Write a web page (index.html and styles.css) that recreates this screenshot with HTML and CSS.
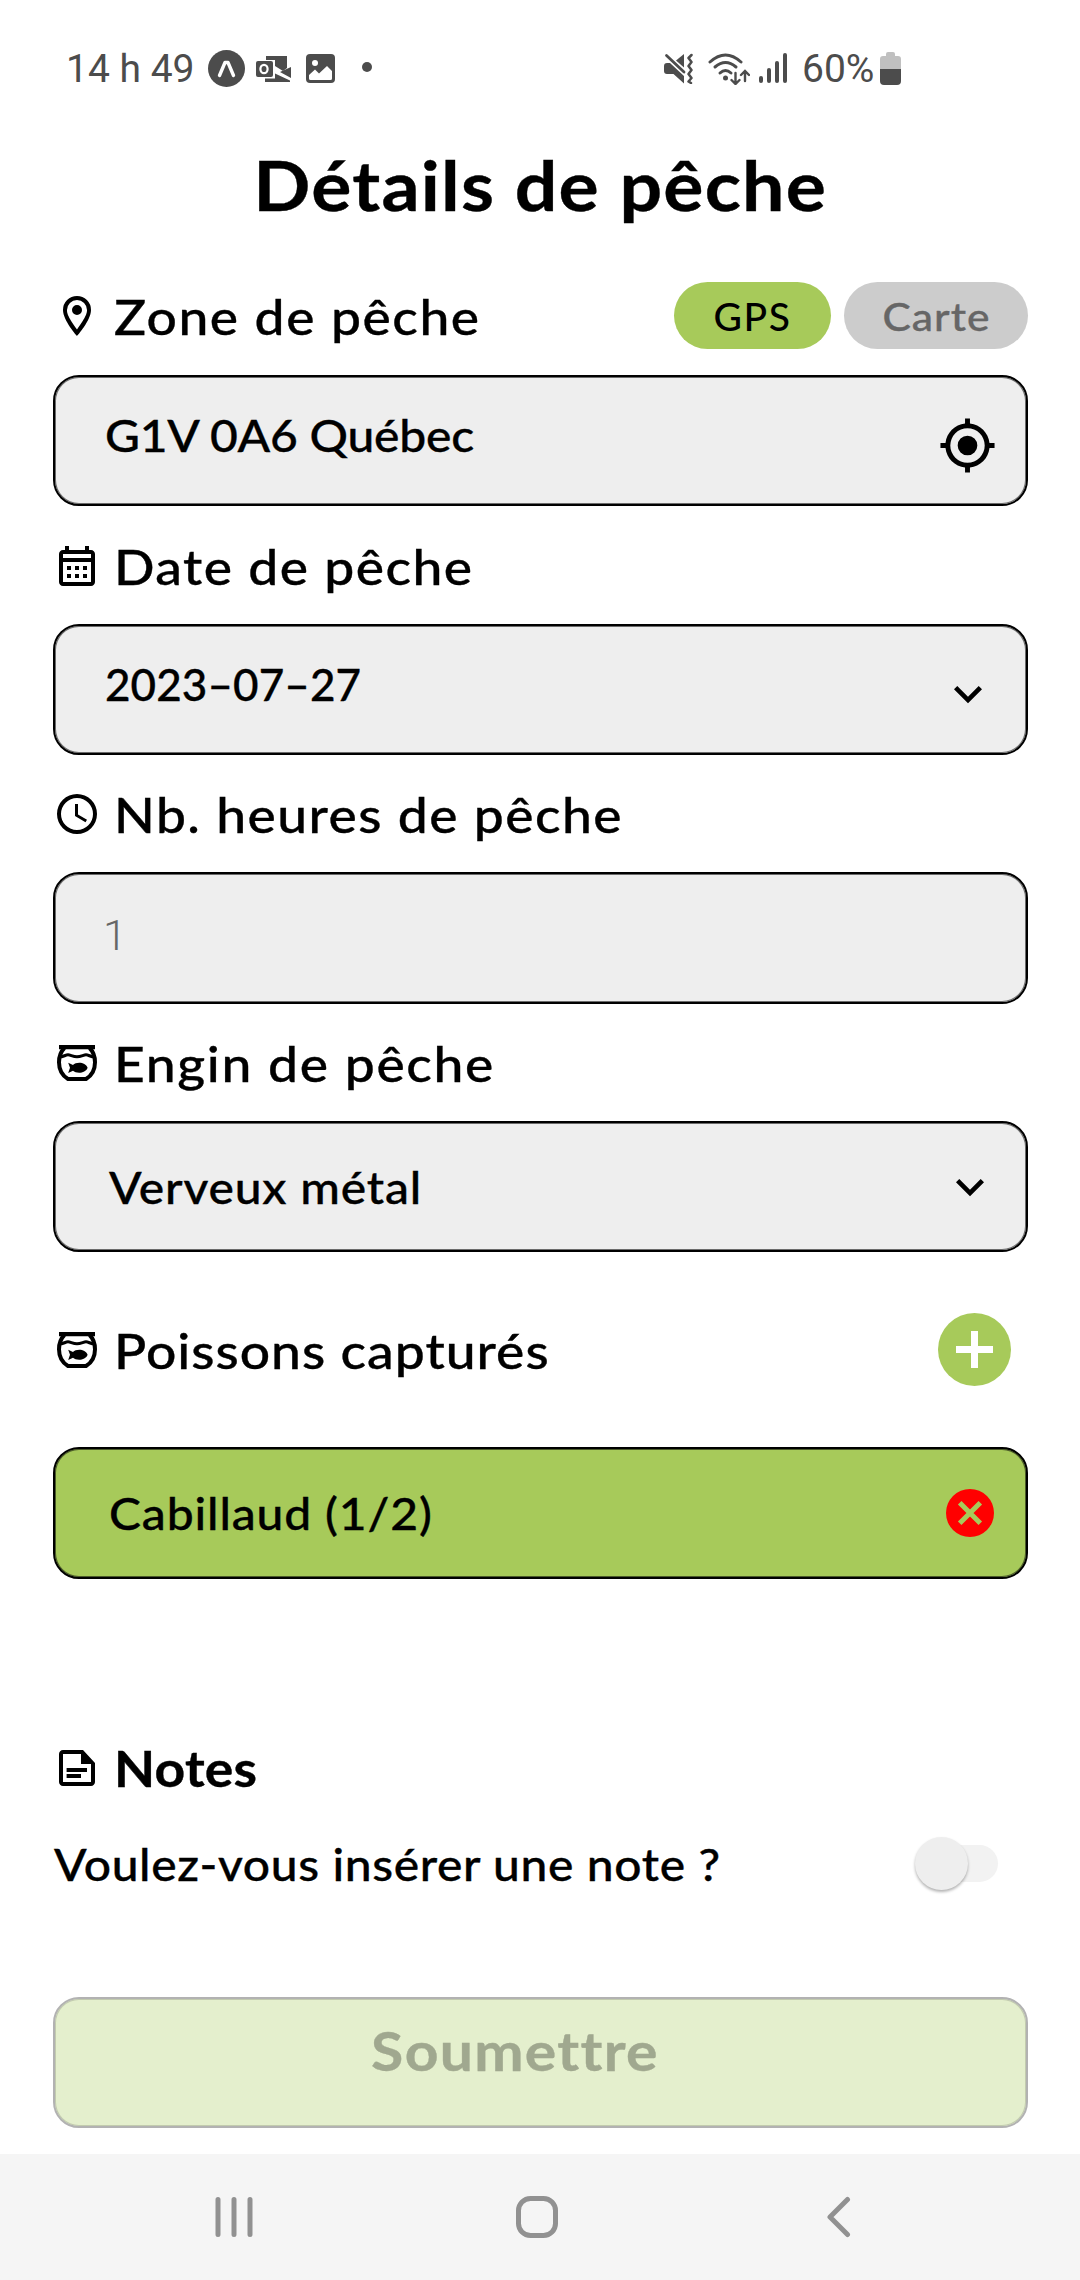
FILE: index.html
```html
<!DOCTYPE html>
<html lang="fr">
<head>
<meta charset="utf-8">
<title>Détails de pêche</title>
<link rel="stylesheet" href="styles.css">
</head>
<body>
<svg class="defs" width="0" height="0">
  <symbol id="fishbowl" viewBox="0 0 24 24">
    <path d="M3 3h18v2.1H3z"/>
    <path d="M5.7 4.5C3.9 6.300 3 8.900 3 11.600C3 15.200 4.700 18.300 7.500 20H16.500C19.300 18.300 21 15.200 21 11.600C21 8.900 20.100 6.300 18.300 4.500" fill="none" stroke="currentColor" stroke-width="2"/>
    <path d="M3.300 9C5 9 6.300 7.900 7.500 7.900S10 8.900 12 8.900S15.300 7.900 16.500 7.900S19 9 20.700 9" fill="none" stroke="currentColor" stroke-width="1.500"/>
    <path d="M7.600 11.900L10 13C11.500 11.300 16.300 11.300 17.300 14.400C16.300 17.400 11.500 17.400 10 15.900L7.600 17L8.500 14.400Z"/>
  </symbol>
  <symbol id="chevron" viewBox="0 0 24 24">
    <path d="M7.410 8.580L12 13.170L16.590 8.580L18 10L12 16L6 10Z"/>
  </symbol>
</svg>

<header class="status">
  <span class="clock">14 h 49</span>
  <svg class="expo" width="37" height="37" viewBox="0 0 37 37"><circle cx="18.500" cy="18.500" r="18.500"/><path d="M11.500 25.500L17 12.500H20L25.500 25.500" fill="none" stroke="#fff" stroke-width="3.400" stroke-linecap="round" stroke-linejoin="round"/></svg>
  <svg class="mail" width="35" height="28" viewBox="0 0 35 28"><path d="M10 1H31V13L27 16L19 11V5H10Z"/><rect x="0" y="6" width="17" height="16" rx="2"/><ellipse cx="8" cy="14" rx="3.600" ry="4.200" fill="none" stroke="#fff" stroke-width="2.200"/><path d="M35 12V23L24 17ZM9 23.500H19V18.500L34 25.500V27H9Z"/></svg>
  <svg class="photo" width="29" height="29" viewBox="0 0 29 29"><rect width="29" height="29" rx="4"/><circle cx="9" cy="9" r="3" fill="#fff"/><path d="M3 21L9 15.500L13 19.500L21 12L26 17V24.500Q26 26 24.500 26H4.500Q3 26 3 24.500Z" fill="#fff"/></svg>
  <i class="dot"></i>
  <span class="spacer"></span>
  <svg class="mute" width="30" height="31" viewBox="0 0 30 31"><path d="M0 13Q0 10 3 10H6L20 23V30.500L9.500 21H3Q0 21 0 18Z"/><path d="M12 7.500L20 1V14.500Z"/><path d="M2.500 2.500L20 19" stroke="currentColor" stroke-width="2.800" stroke-linecap="round"/><path d="M27.500 2L24.500 5L27.500 9L24.500 13L27.500 17L24.500 21L27.500 25L24.500 28.500L27 30" fill="none" stroke="currentColor" stroke-width="2.500" stroke-linecap="round" stroke-linejoin="round"/></svg>
  <svg class="wifi" width="42" height="32" viewBox="0 0 42 32"><g fill="none" stroke="currentColor" stroke-width="3" stroke-linecap="round"><path d="M2 9Q17.500-5 33 9"/><path d="M7 14Q17.500 5 28 14"/><path d="M12 20Q17.500 15 23 20"/><path d="M27.500 20V30M23.500 27L27.500 31L31.500 27M37 28V19M33 22L37 18L41 22" stroke-width="2.400"/></g><circle cx="17.500" cy="25" r="2.500"/></svg>
  <svg class="bars" width="28" height="31" viewBox="0 0 28 31"><rect y="23" width="4" height="7" rx="2"/><rect x="8" y="15" width="4" height="15" rx="2"/><rect x="16" y="8" width="4" height="22" rx="2"/><rect x="24" width="4" height="30" rx="2"/></svg>
  <span class="percent">60%</span>
  <svg class="battery" width="21" height="33" viewBox="0 0 21 33"><path d="M6 2Q6 0 8 0H13Q15 0 15 2V4H18Q21 4 21 7V17H0V7Q0 4 3 4H6Z" fill="#c0c0c0"/><path d="M0 17H21V29Q21 33 17 33H4Q0 33 0 29Z"/></svg>
</header>

<h1 class="title"><span class="wide">Détails de pêche</span></h1>

<main class="form">
  <div class="label">
    <svg class="icon" viewBox="0 0 24 24"><path d="M12 6.500A2.500 2.500 0 0 1 14.500 9A2.500 2.500 0 0 1 12 11.500A2.500 2.500 0 0 1 9.500 9A2.500 2.500 0 0 1 12 6.500M12 2A7 7 0 0 1 19 9C19 14.250 12 22 12 22S5 14.250 5 9A7 7 0 0 1 12 2M12 4A5 5 0 0 0 7 9C7 10 7 12 12 18.710C17 12 17 10 17 9A5 5 0 0 0 12 4Z"/></svg>
    <span class="wide t-zone">Zone de pêche</span>
    <div class="pills">
      <button class="pill pill-on"><span>GPS</span></button>
      <button class="pill pill-off"><span class="wide">Carte</span></button>
    </div>
  </div>
  <div class="field field-high">
    <span class="wide t-place">G1V 0A6 Québec</span>
    <svg class="gps" viewBox="0 0 24 24"><path d="M12 8A4 4 0 0 1 16 12A4 4 0 0 1 12 16A4 4 0 0 1 8 12A4 4 0 0 1 12 8M3.050 13H1V11H3.050C3.500 6.830 6.830 3.500 11 3.050V1H13V3.050C17.170 3.500 20.500 6.830 20.950 11H23V13H20.950C20.500 17.170 17.170 20.500 13 20.950V23H11V20.950C6.830 20.500 3.500 17.170 3.050 13M12 5A7 7 0 0 0 5 12A7 7 0 0 0 12 19A7 7 0 0 0 19 12A7 7 0 0 0 12 5Z"/></svg>
  </div>

  <div class="label label-date">
    <svg class="icon" viewBox="0 -1 24 24"><path d="M7 11H9V13H7V11M21 5V19C21 20.110 20.110 21 19 21H5C3.890 21 3 20.100 3 19V5C3 3.900 3.900 3 5 3H6V1H8V3H16V1H18V3H19C20.110 3 21 3.900 21 5M5 7H19V5H5V7M19 19V9H5V19H19M15 13V11H17V13H15M11 13V11H13V13H11M7 15H9V17H7V15M15 17V15H17V17H15M11 17V15H13V17H11Z"/></svg>
    <span class="wide t-date">Date de pêche</span>
  </div>
  <div class="field field-high">
    <span class="t-day">2023–07–27</span>
    <svg class="chevron"><use href="#chevron"/></svg>
  </div>

  <div class="label label-hours">
    <svg class="icon" viewBox="0 0 24 24"><path d="M12 20A8 8 0 0 0 20 12A8 8 0 0 0 12 4A8 8 0 0 0 4 12A8 8 0 0 0 12 20M12 2A10 10 0 0 1 22 12A10 10 0 0 1 12 22A10 10 0 0 1 2 12A10 10 0 0 1 12 2M12.500 7V12.250L17 14.920L16.250 16.150L11 13V7H12.500Z"/></svg>
    <span class="wide t-hours">Nb. heures de pêche</span>
  </div>
  <div class="field field-hours"><span class="placeholder">1</span></div>

  <div class="label label-gear">
    <svg class="icon"><use href="#fishbowl"/></svg>
    <span class="wide t-gear">Engin de pêche</span>
  </div>
  <div class="field field-inset">
    <span class="wide t-gearname">Verveux métal</span>
    <svg class="chevron"><use href="#chevron"/></svg>
  </div>

  <div class="label label-fish">
    <svg class="icon"><use href="#fishbowl"/></svg>
    <span class="wide t-fish">Poissons capturés</span>
    <svg class="add" viewBox="0 0 73 73"><circle cx="36.500" cy="36.500" r="36.500"/><path d="M18 36.500H55M36.500 18V55" stroke="#fff" stroke-width="7"/></svg>
  </div>
  <div class="field field-inset field-green">
    <span class="wide t-cod">Cabillaud (1/2)</span>
    <svg class="remove" viewBox="0 0 48 48"><circle cx="24" cy="24" r="24"/><path d="M13.700 13.700L34.300 34.300M34.300 13.700L13.700 34.300" stroke="#a7ca5a" stroke-width="5"/></svg>
  </div>

  <div class="label label-notes">
    <svg class="icon" viewBox="0 0 24 24"><path fill-rule="evenodd" d="M5 3H15L21 9.500V19C21 20.100 20.100 21 19 21H5C3.900 21 3 20.100 3 19V5C3 3.900 3.900 3 5 3M5 5V19H19V10H14V5ZM6.800 12H17V14H6.800ZM6.800 15H14V17H6.800Z"/></svg>
    <span class="wide t-notes">Notes</span>
  </div>
  <div class="question">
    <span class="wide t-question">Voulez-vous insérer une note ?</span>
    <span class="toggle"><i class="knob"></i></span>
  </div>
  <button class="field submit" disabled><span class="wide">Soumettre</span></button>
</main>

<nav class="navbar">
  <svg width="38" height="42" viewBox="0 0 38 42"><path d="M3 3.500V38.500M19 3.500V38.500M35 3.500V38.500"/></svg>
  <svg class="home" width="42" height="42" viewBox="0 0 42 42"><rect x="2.500" y="2.500" width="37" height="37" rx="12"/></svg>
  <svg width="25" height="42" viewBox="0 0 25 42"><path d="M21.500 3.500L4 21L21.500 38.500"/></svg>
</nav>
</body>
</html>
```
FILE: styles.css
```css
* { box-sizing: border-box; }

body {
  width: 1080px;
  height: 2280px;
  margin: 0;
  display: flex;
  flex-direction: column;
  background: #fff;
  color: #000;
  font-family: Lato, "Open Sans", sans-serif;
  font-weight: 500;
  font-variant-ligatures: none;
  overflow: hidden;
}

.defs { display: none; }
svg { flex: none; fill: currentColor; }
span { white-space: pre; }

/* Status bar */
.status {
  height: 114px;
  padding: 23px 179px 0 66px;
  display: flex;
  align-items: center;
  color: #4c4c4c;
  font-family: Roboto, sans-serif;
  font-weight: 400;
  font-size: 39px;
}
.clock { width: 142px; }
.mail { margin-left: 11px; }
.photo { margin-left: 15px; }
.dot { width: 10px; height: 10px; margin: 0 0 3px 27px; border-radius: 50%; background: currentColor; }
.spacer { flex: 1; }
.wifi { margin-left: 14px; }
.bars { margin-left: 9px; }
.percent { width: 77px; margin-left: 15px; }
.battery { margin-left: 1px; }

/* Slightly extended letterforms */
.wide {
  display: inline-block;
  transform: scaleX(1.09);
  transform-origin: left center;
  -webkit-text-stroke: 0.35px currentColor;
}

.title {
  height: 143px;
  margin: 0;
  text-align: center;
  font-size: 69px;
  line-height: 142px;
  font-weight: 700;
  letter-spacing: 1.1px;
}
.title .wide, .pill .wide, .submit .wide { transform-origin: center; }

/* Form */
.form {
  flex: 1;
  padding: 0 52px 0 53px;
  display: flex;
  flex-direction: column;
}
.label {
  height: 118px;
  display: flex;
  align-items: center;
  font-size: 49px;
}
.label-date { padding-top: 2px; }
.label-hours, .label-gear { height: 117px; }
.label-fish { height: 195px; padding-right: 17px; }
.label-notes { height: 96px; margin-top: 141px; font-weight: 700; }
.icon { width: 48px; height: 48px; margin-right: 13px; }

/* Tracking per line */
.t-zone { letter-spacing: 1.4px; }
.t-date { letter-spacing: 1.3px; }
.t-hours { letter-spacing: 1.3px; }
.t-gear { letter-spacing: 1.5px; }
.t-fish { letter-spacing: 0.9px; }
.t-place { letter-spacing: -0.2px; }
.t-day { letter-spacing: 0.1px; -webkit-text-stroke: 0.35px currentColor; }
.t-gearname { letter-spacing: 0.75px; }
.t-cod { letter-spacing: 0.8px; }
.t-notes { letter-spacing: 0.2px; }
.t-question { letter-spacing: 0.6px; }

.pills { margin: -2px 0 0 auto; display: flex; gap: 13px; }
.pill {
  height: 67px;
  padding: 0;
  border: 0;
  border-radius: 34px;
  font: inherit;
  font-size: 39px;
  color: #000;
  background: #a7ca5a;
}
.pill-on { width: 157px; letter-spacing: 1.5px; }
.pill-off { width: 184px; letter-spacing: 0.9px; color: #666; background: #ccc; }
.pill span { position: relative; top: 1px; }

.field {
  height: 131px;
  flex: none;
  padding: 0 30px 0 50px;
  display: flex;
  align-items: center;
  justify-content: space-between;
  border: 2px solid #000;
  border-radius: 26px;
  background: #eee;
  box-shadow: inset 0 0 0 1px rgba(0, 0, 0, 0.55);
  font-size: 44px;
}
.field-high { padding-right: 29px; }
.field-high span { margin-bottom: 11px; }
.field-high svg { margin-top: 9px; }
.field-inset { padding-left: 54px; padding-right: 28px; }
.gps { width: 59px; height: 59px; }
.chevron { width: 56px; height: 56px; }
.field-high .chevron { margin-right: 1px; }
.field-hours { height: 132px; padding-left: 48px; }
.placeholder {
  margin-bottom: 6px;
  color: #666;
  font-family: Roboto, sans-serif;
  font-weight: 300;
  font-size: 43px;
}
.field-green { height: 132px; padding-right: 32px; background: #a7ca5a; }
.add { width: 73px; height: 73px; margin-left: auto; color: #a7ca5a; }
.remove { width: 48px; height: 48px; color: #f00; }

.question {
  height: 95px;
  padding: 0 30px 0 1px;
  display: flex;
  align-items: center;
  justify-content: space-between;
  font-size: 44px;
}
.toggle {
  width: 78px;
  height: 37px;
  display: flex;
  align-items: center;
  border-radius: 19px;
  background: #f2f2f2;
}
.knob {
  width: 53px;
  height: 53px;
  margin-left: -5px;
  border-radius: 50%;
  background: #eee;
  box-shadow: 0 2px 3px rgba(0, 0, 0, 0.3);
}

.submit {
  width: 100%;
  margin-top: 86px;
  padding: 0 52px 25px 0;
  justify-content: center;
  border-color: #b2b2b2;
  background: #e4efcd;
  box-shadow: inset 0 0 0 1px rgba(0, 0, 0, 0.15);
  color: #a0a88f;
  font-family: inherit;
  font-size: 54px;
  font-weight: 700;
  letter-spacing: 1.2px;
}

/* System navigation */
.navbar {
  height: 126px;
  padding: 0 229px 0 215px;
  display: flex;
  align-items: center;
  justify-content: space-between;
  background: #f5f5f5;
}
.home { margin-right: 6px; }
.navbar svg {
  fill: none;
  stroke: #919191;
  stroke-width: 5;
  stroke-linecap: round;
  stroke-linejoin: round;
}
```
